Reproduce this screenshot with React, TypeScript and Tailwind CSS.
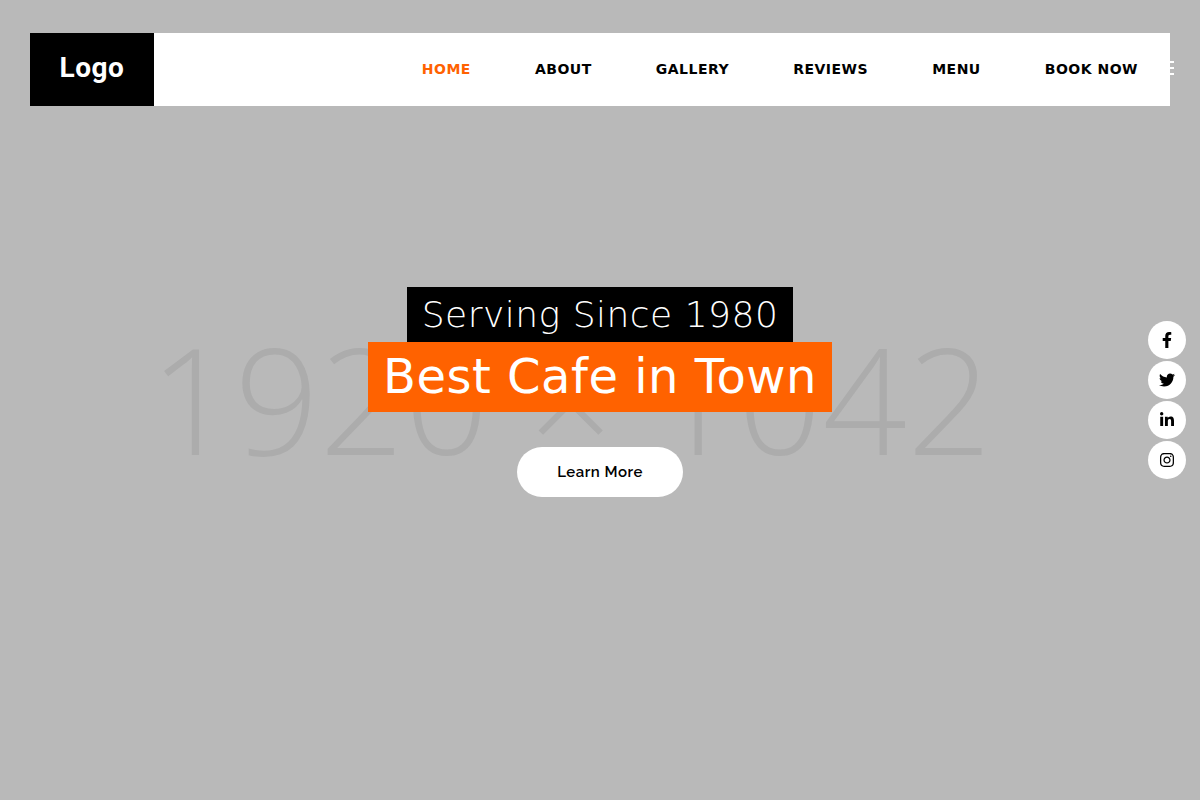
import { FaFacebookF, FaTwitter, FaLinkedinIn, FaInstagram } from "react-icons/fa"

const links = ["Home", "About", "Gallery", "Reviews", "Menu", "Book Now"]

const socials = [
    { name: "Facebook", icon: FaFacebookF },
    { name: "Twitter", icon: FaTwitter },
    { name: "LinkedIn", icon: FaLinkedinIn },
    { name: "Instagram", icon: FaInstagram },
]

const Header = () => {
    return <header className="relative bg-white flex items-stretch justify-between">

        <a href="#" className="bg-black text-white flex items-center justify-center w-[124px] h-[73px] pb-1 font-[Roboto,sans-serif] text-[28px] font-bold">
            Logo
        </a>

        <nav className="flex items-center pb-0.5">
            {links.map((link, i) => (
                <a
                    key={link}
                    href="#"
                    className={`px-8 text-sm font-bold uppercase whitespace-nowrap ${i === 0 ? "text-[#ff6200]" : "text-black"}`}
                >
                    {link}
                </a>
            ))}
        </nav>

        {/* drawer toggle, hangs over the right edge of the bar */}
        <button aria-label="Open menu" className="absolute -right-1 top-7 w-4 flex flex-col gap-1">
            <span className="h-0.5 w-full bg-white"></span>
            <span className="h-0.5 w-full bg-white"></span>
            <span className="h-0.5 w-full bg-white"></span>
        </button>

    </header>
}

const Socials = () => {
    return <div className="fixed right-[14px] top-1/2 -translate-y-1/2 flex flex-col gap-0.5">
        {socials.map(({ name, icon: Icon }) => (
            <a key={name} href="#" aria-label={name} className="size-[38px] rounded-full bg-white text-black flex items-center justify-center">
                <Icon className="size-4" />
            </a>
        ))}
    </div>
}

export default function App() {
    return <div className="relative min-h-screen overflow-hidden bg-[#b9b9b9] px-[30px] pt-[33px] flex flex-col font-['DejaVu_Sans',sans-serif] tracking-[0.5px]">

        {/* placeholder banner */}
        <div className="absolute inset-0 flex items-center justify-center pr-[58px] pb-1 font-['Open_Sans',sans-serif] font-light text-[148px] leading-none text-[#acacac] whitespace-nowrap">
            1920 × 1042
        </div>

        <Header />

        <main className="relative flex flex-col items-center pt-[181px]">
            <h2 className="bg-black text-white px-[15px] h-[55px] leading-[55px] text-4xl font-extralight">
                Serving Since 1980
            </h2>
            <h1 className="bg-[#ff6200] text-white px-[15px] h-[70px] leading-[68px] text-5xl">
                Best Cafe in Town
            </h1>
            <button className="mt-[35px] h-[50px] px-10 rounded-full bg-white text-black text-[15px] font-semibold font-[Raleway,Lato,sans-serif]">
                Learn More
            </button>
        </main>

        <Socials />

    </div>
}
